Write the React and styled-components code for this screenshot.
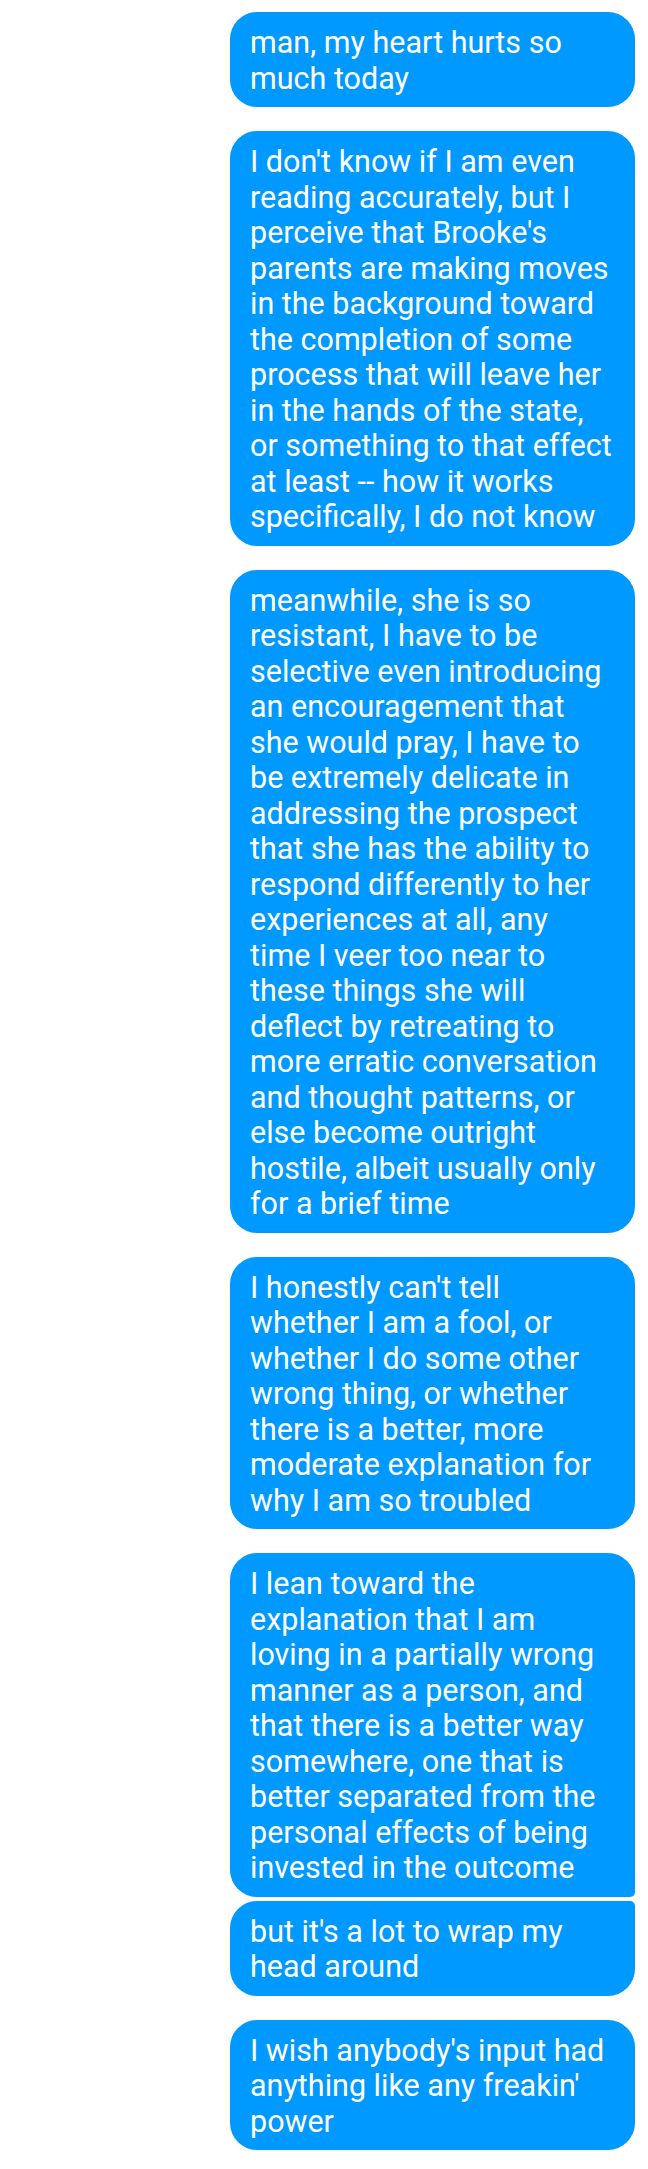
import React from "react";
import styled, { createGlobalStyle, css } from "styled-components";

const GlobalStyle = createGlobalStyle`
  html, body {
    margin: 0;
    padding: 0;
    background: #ffffff;
  }
  body {
    font-family: Roboto, "Noto Sans", "Liberation Sans", sans-serif;
    -webkit-font-smoothing: antialiased;
  }
`;

const Thread = styled.main`
  display: flex;
  flex-direction: column;
  align-items: flex-end;
  gap: 24px;
  padding: 12px 13px 12px 0;
  min-height: 2169px;
  box-sizing: border-box;
`;

const Group = styled.div`
  display: flex;
  flex-direction: column;
  align-items: flex-end;
  gap: 4px;
`;

const Bubble = styled.div`
  width: 405px;
  box-sizing: border-box;
  padding: 13px 20px 11px 20px;
  background: #0099ff;
  color: #ffffff;
  font-family: Roboto, "Noto Sans", "Liberation Sans", sans-serif;
  font-size: 30.5px;
  line-height: 35.5px;
  white-space: pre;
  border-radius: 27px;
  ${({ $pos }) =>
    $pos === "first" &&
    css`
      border-bottom-right-radius: 5px;
    `}
  ${({ $pos }) =>
    $pos === "last" &&
    css`
      border-top-right-radius: 5px;
    `}
`;

const groups = [
  [
    "man, my heart hurts so\nmuch today",
  ],
  [
    "I don't know if I am even\nreading accurately, but I\nperceive that Brooke's\nparents are making moves\nin the background toward\nthe completion of some\nprocess that will leave her\nin the hands of the state,\nor something to that effect\nat least -- how it works\nspecifically, I do not know",
  ],
  [
    "meanwhile, she is so\nresistant, I have to be\nselective even introducing\nan encouragement that\nshe would pray, I have to\nbe extremely delicate in\naddressing the prospect\nthat she has the ability to\nrespond differently to her\nexperiences at all, any\ntime I veer too near to\nthese things she will\ndeflect by retreating to\nmore erratic conversation\nand thought patterns, or\nelse become outright\nhostile, albeit usually only\nfor a brief time",
  ],
  [
    "I honestly can't tell\nwhether I am a fool, or\nwhether I do some other\nwrong thing, or whether\nthere is a better, more\nmoderate explanation for\nwhy I am so troubled",
  ],
  [
    "I lean toward the\nexplanation that I am\nloving in a partially wrong\nmanner as a person, and\nthat there is a better way\nsomewhere, one that is\nbetter separated from the\npersonal effects of being\ninvested in the outcome",
    "but it's a lot to wrap my\nhead around",
  ],
  [
    "I wish anybody's input had\nanything like any freakin'\npower",
  ],
];

function positionOf(i, n) {
  if (n === 1) return "single";
  if (i === 0) return "first";
  if (i === n - 1) return "last";
  return "middle";
}

export default function App() {
  return (
    <>
      <GlobalStyle />
      <Thread>
        {groups.map((msgs, gi) => (
          <Group key={gi}>
            {msgs.map((text, i) => (
              <Bubble key={i} $pos={positionOf(i, msgs.length)}>
                {text}
              </Bubble>
            ))}
          </Group>
        ))}
      </Thread>
    </>
  );
}
